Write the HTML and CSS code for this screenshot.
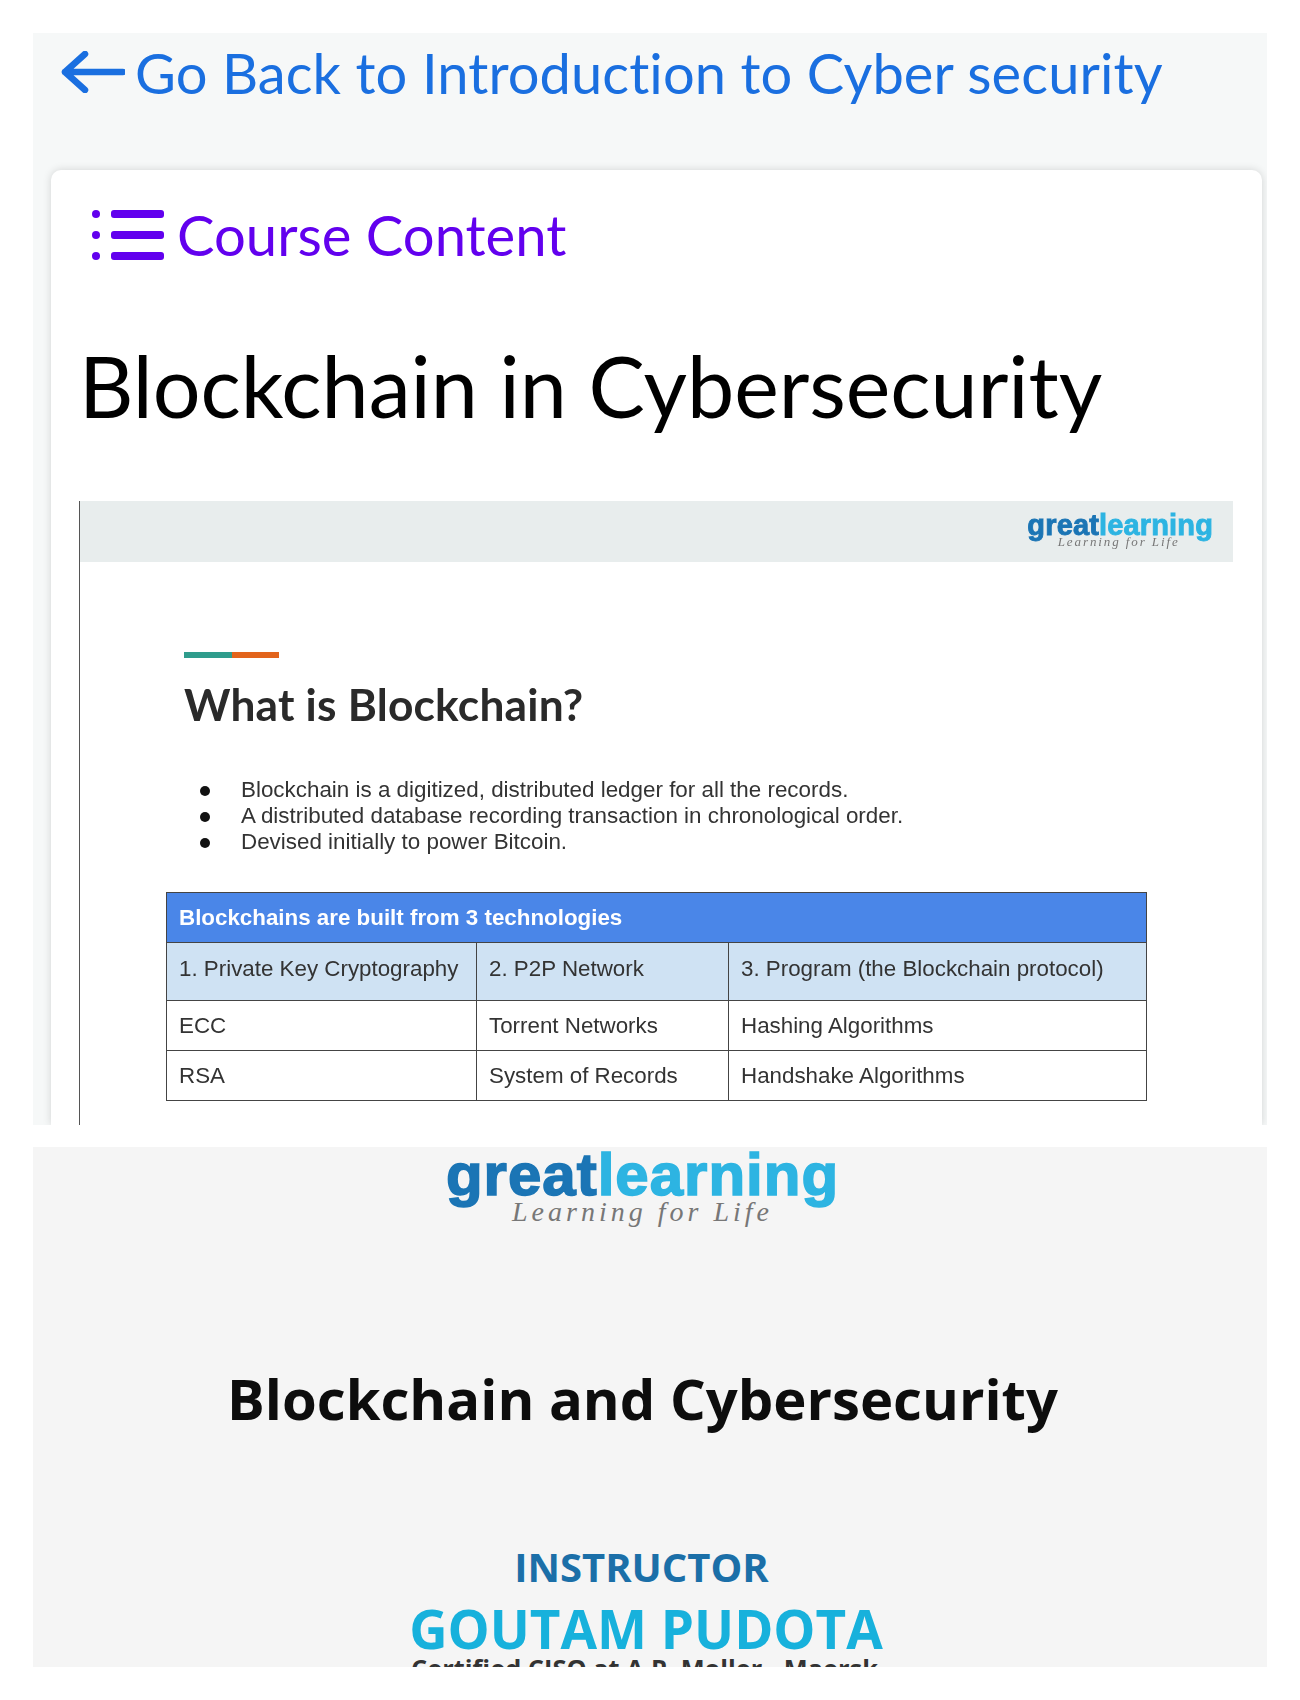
FILE: index.html
```html
<!DOCTYPE html>
<html lang="en">
<head>
    <meta charset="UTF-8">
    <title>Blockchain in Cybersecurity</title>
    <link rel="stylesheet" href="styles.css">
</head>
<body>
    <div class="panel">
        <a class="back-link" href="#">
            <svg class="back-icon" viewBox="0 0 64 42" aria-hidden="true">
                <path d="M24 3 L4 21 L24 39 M4 21 H62" fill="none" stroke="#1a6fe0" stroke-width="6.5" stroke-linecap="round" stroke-linejoin="round"/>
            </svg>
            <span>Go Back to Introduction to Cyber security</span>
        </a>
        <div class="card">
            <div class="course-content">
                <svg class="list-icon" viewBox="0 0 72 50" aria-hidden="true">
                    <circle cx="4" cy="4" r="4"/>
                    <circle cx="4" cy="25" r="4"/>
                    <circle cx="4" cy="46" r="4"/>
                    <rect x="19" y="0" width="53" height="8" rx="3"/>
                    <rect x="19" y="21" width="53" height="8" rx="3"/>
                    <rect x="19" y="42" width="53" height="8" rx="3"/>
                </svg>
                <span>Course Content</span>
            </div>
            <h1 class="lesson-title">Blockchain in Cybersecurity</h1>
            <div class="slide">
                <div class="slide-top">
                    <div class="logo logo-small">
                        <div class="logo-word"><span class="dark">great</span><span class="light">learning</span></div>
                        <div class="logo-tag">Learning for Life</div>
                    </div>
                </div>
                <div class="slide-body">
                    <div class="accent"><span class="accent-a"></span><span class="accent-b"></span></div>
                    <h2 class="slide-title">What is Blockchain?</h2>
                    <ul class="slide-list">
                        <li>Blockchain is a digitized, distributed ledger for all the records.</li>
                        <li>A distributed database recording transaction in chronological order.</li>
                        <li>Devised initially to power Bitcoin.</li>
                    </ul>
                    <table class="tech-table">
                        <tr class="row-head"><th colspan="3">Blockchains are built from 3 technologies</th></tr>
                        <tr class="row-sub">
                            <td class="col-a">1. Private Key Cryptography</td>
                            <td class="col-b">2. P2P Network</td>
                            <td>3. Program (the Blockchain protocol)</td>
                        </tr>
                        <tr>
                            <td>ECC</td>
                            <td>Torrent Networks</td>
                            <td>Hashing Algorithms</td>
                        </tr>
                        <tr>
                            <td>RSA</td>
                            <td>System of Records</td>
                            <td>Handshake Algorithms</td>
                        </tr>
                    </table>
                </div>
            </div>
        </div>
    </div>

    <div class="video">
        <div class="logo logo-big">
            <div class="logo-word"><span class="dark">great</span><span class="light">learning</span></div>
            <div class="logo-tag">Learning for Life</div>
        </div>
        <div class="video-title">Blockchain and Cybersecurity</div>
        <div class="instructor-label">INSTRUCTOR</div>
        <div class="instructor-name">GOUTAM PUDOTA</div>
        <div class="instructor-role">Certified CISO at A.P. Moller - Maersk</div>
    </div>
</body>
</html>
```

FILE: styles.css
```css
body {
    margin: 0;
    padding: 33px 33px 0;
    background: #ffffff;
    font-family: "Liberation Sans", Arial, sans-serif;
}

.panel {
    height: 1092px;
    overflow: hidden;
    background: #f6f8f8;
}
.back-link {
    display: flex;
    align-items: center;
    gap: 10px;
    height: 137px;
    padding-left: 28px;
    box-sizing: border-box;
    padding-bottom: 58px;
    color: #1a6fe0;
    font-family: Lato, sans-serif;
    font-size: 56px;
    font-variant-ligatures: none;
    letter-spacing: 0.1px;
    text-decoration: none;
}
.back-icon {
    width: 64px;
    height: 42px;
    flex: none;
    margin-bottom: 2px;
}

.card {
    height: 955px;
    margin: 0 5px 0 18px;
    overflow: hidden;
    background: #ffffff;
    border-radius: 10px 10px 0 0;
    box-shadow: 0 0 8px rgba(0, 0, 0, 0.15);
}
.course-content {
    display: flex;
    align-items: center;
    gap: 13px;
    padding: 38px 0 0 41px;
    color: #6200ee;
    font-family: Lato, sans-serif;
    font-size: 56.2px;
    line-height: 54px;
}
.list-icon {
    width: 72px;
    height: 50px;
    flex: none;
    fill: #6200ee;
}
.lesson-title {
    margin: 74px 0 0 28px;
    color: #000000;
    font-family: Lato, sans-serif;
    font-size: 84.4px;
    font-weight: 400;
    line-height: 100px;
}

.slide {
    margin: 65px 29px 0 28px;
    border-left: 1px solid #555555;
    filter: blur(0.4px);
}
.slide-top {
    display: flex;
    justify-content: flex-end;
    height: 61px;
    padding-right: 20px;
    background: #e8eded;
}
.slide-body {
    padding: 90px 0 80px 104px;
}
.accent {
    display: flex;
    width: 95px;
    height: 6px;
}
.accent-a {
    flex: 1;
    background: #2f9c8c;
}
.accent-b {
    flex: 1;
    background: #e2641c;
}
.slide-title {
    margin: 21px 0 0;
    color: #2a2a2a;
    font-family: Lato, sans-serif;
    font-size: 44.3px;
    font-weight: 700;
    letter-spacing: 0.2px;
    line-height: 50px;
}
.slide-list {
    margin: 48px 0 0;
    padding: 0;
    list-style: none;
    color: #333333;
    font-size: 22.4px;
    line-height: 26px;
}
.slide-list li {
    display: flex;
}
.slide-list li::before {
    content: "";
    flex: none;
    width: 10px;
    height: 10px;
    margin: 9px 31px 0 16px;
    border-radius: 50%;
    background: #111111;
}

.tech-table {
    width: 981px;
    margin: 37px 0 0 -18px;
    border-collapse: collapse;
    color: #333333;
    font-size: 22.35px;
}
.tech-table th,
.tech-table td {
    height: 50px;
    padding: 0 12px;
    border: 1.5px solid #444444;
    box-sizing: border-box;
    text-align: left;
}
.row-head th {
    background: #4a86e8;
    color: #ffffff;
    font-weight: 700;
}
.row-sub td {
    height: 58px;
    padding-bottom: 6px;
    background: #cfe2f3;
}
.col-a {
    width: 310px;
}
.col-b {
    width: 252px;
}

.logo {
    text-align: center;
}
.logo-word {
    font-family: "Liberation Sans", Arial, sans-serif;
    font-weight: 700;
    line-height: 1;
}
.dark {
    color: #1b75b5;
}
.light {
    color: #2db4e2;
}
.logo-tag {
    color: #777777;
    font-family: "Liberation Serif", serif;
    font-style: italic;
    font-weight: 400;
}
.logo-small {
    padding-top: 10px;
}
.logo-small .logo-word {
    font-size: 29px;
    letter-spacing: 0.15px;
    -webkit-text-stroke: 0.9px;
}
.logo-small .logo-tag {
    margin: -6px 3px 0 0;
    font-size: 13px;
    letter-spacing: 1.9px;
}
.logo-big .logo-word {
    margin-top: -2px;
    font-size: 60px;
    letter-spacing: 1px;
    -webkit-text-stroke: 1.6px;
}
.logo-big .logo-tag {
    margin-top: -9px;
    font-size: 28px;
    letter-spacing: 4px;
}

.video {
    height: 520px;
    margin-top: 22px;
    padding-right: 15px;
    overflow: hidden;
    background: #f5f5f5;
    text-align: center;
    font-family: "Open Sans", sans-serif;
    font-weight: 700;
}
.video-title {
    margin-top: 135px;
    color: #0d0d0d;
    font-size: 56.2px;
    line-height: 70px;
}
.instructor-label {
    margin: 111px 2px 0 0;
    color: #1b6fa8;
    font-size: 40px;
    line-height: 46px;
}
.instructor-name {
    margin: 4px 0 0 7px;
    color: #17b1dc;
    font-size: 53px;
    line-height: 70px;
}
.instructor-role {
    margin: -14px 0 0 4px;
    color: #333333;
    font-size: 25.4px;
    line-height: 36px;
}
```
